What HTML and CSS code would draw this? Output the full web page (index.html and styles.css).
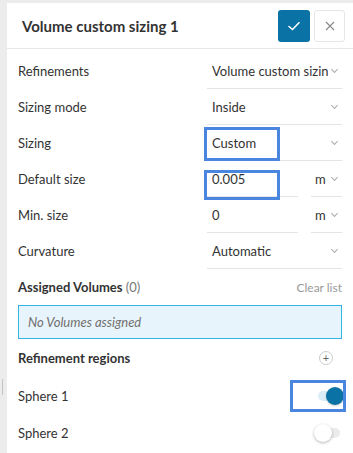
FILE: index.html
```html
<!DOCTYPE html>
<html lang="en">
<head>
  <meta charset="UTF-8">
  <title>Volume custom sizing</title>
  <link rel="stylesheet" href="styles.css">
</head>
<body>
<div class="scroll-mark"></div>
<div class="panel">
  <div class="panel-header">
    <h2 class="panel-title">Volume custom sizing 1</h2>
    <button class="btn btn-ok" aria-label="Save">
      <svg width="14" height="14" viewBox="0 0 14 14"><path d="M2 7.5 L5.5 10.5 L12 3.8" fill="none" stroke="#fff" stroke-width="1.6" stroke-linecap="round" stroke-linejoin="round"/></svg>
    </button>
    <button class="btn btn-close" aria-label="Close">
      <svg width="12" height="12" viewBox="0 0 12 12"><path d="M2 2 L10 10 M10 2 L2 10" stroke="#888" stroke-width="1.1"/></svg>
    </button>
  </div>

  <div class="form">
    <div class="row">
      <div class="label">Refinements</div>
      <div class="field select"><span class="value">Volume custom sizing 1</span><span class="chev"></span></div>
    </div>
    <div class="row">
      <div class="label">Sizing mode</div>
      <div class="field select"><span class="value">Inside</span><span class="chev"></span></div>
    </div>
    <div class="row">
      <div class="label">Sizing</div>
      <div class="field select"><span class="value">Custom</span><span class="chev"></span><span class="mark mark-sizing"></span></div>
    </div>
    <div class="row">
      <div class="label">Default size</div>
      <div class="field-pair">
        <div class="field input"><span class="value">0.005</span><span class="mark mark-size"></span></div>
        <div class="field unit"><span class="value">m</span><span class="chev"></span></div>
      </div>
    </div>
    <div class="row">
      <div class="label">Min. size</div>
      <div class="field-pair">
        <div class="field input"><span class="value">0</span></div>
        <div class="field unit"><span class="value">m</span><span class="chev"></span></div>
      </div>
    </div>
    <div class="row">
      <div class="label">Curvature</div>
      <div class="field select"><span class="value">Automatic</span><span class="chev"></span></div>
    </div>

    <div class="section-head">
      <div class="section-title">Assigned Volumes <span class="count">(0)</span></div>
      <div class="clear-link">Clear list</div>
    </div>
    <div class="assign-box">No Volumes assigned</div>

    <div class="section-head regions-head">
      <div class="section-title">Refinement regions</div>
      <div class="add-btn">+</div>
    </div>

    <div class="toggle-row">
      <div class="label">Sphere 1</div>
      <div class="toggle on"><span class="knob"></span><span class="mark mark-toggle"></span></div>
    </div>
    <div class="toggle-row">
      <div class="label">Sphere 2</div>
      <div class="toggle"><span class="knob"></span></div>
    </div>
  </div>
</div>
</body>
</html>
```

FILE: styles.css
```css
body {
  font-family: 'Lato', 'Noto Sans', sans-serif;
  background-color: #ececec;
  margin: 0;
  padding: 3px 0 0 7px;
  height: 450px;
  overflow: hidden;
  color: #333;
}

.scroll-mark {
  position: absolute;
  left: 2px;
  top: 379px;
  width: 1px;
  height: 16px;
  background: #c4c4c4;
}

.panel {
  background: white;
  height: 450px;
}

.panel-header {
  height: 45px;
  display: flex;
  align-items: center;
  gap: 4px;
  padding: 0 8px 0 15px;
  border-bottom: 1px solid #e6e6e6;
}

.panel-title {
  flex: 1;
  margin: 0;
  font-size: 15px;
  font-weight: 700;
  color: #333;
}

.btn {
  width: 32px;
  height: 32px;
  border-radius: 3px;
  display: flex;
  align-items: center;
  justify-content: center;
  padding: 0;
  cursor: pointer;
}

.btn-ok {
  background-color: #0b72a5;
  border: none;
}

.btn-close {
  width: 31px;
  background: white;
  border: 1px solid #e6e6e6;
}

.form {
  padding: 4px 11px 0 11px;
}

.row {
  height: 36px;
  display: flex;
  align-items: center;
}

.label {
  flex: 1;
  font-size: 13px;
  color: #333;
}

.field {
  position: relative;
  height: 36px;
  display: flex;
  align-items: center;
  border-bottom: 1px solid #e4e4e4;
  box-sizing: border-box;
  font-size: 13px;
  color: #333;
}

.select {
  width: 135px;
  padding: 0 5px 0 5px;
}

.value {
  flex: 1;
  min-width: 0;
  white-space: nowrap;
  overflow: hidden;
}

.chev {
  flex-shrink: 0;
  width: 4px;
  height: 4px;
  margin: -3px 0 0 4px;
  border-right: 1px solid #aaa;
  border-bottom: 1px solid #aaa;
  transform: rotate(45deg);
}

.field-pair {
  width: 135px;
  display: flex;
  gap: 13px;
}

.input {
  width: 91px;
  padding-left: 5px;
}

.unit {
  width: 31px;
  padding: 0 5px 0 4px;
}

.mark {
  position: absolute;
  border: 3px solid #4a86e0;
  box-sizing: border-box;
}

.mark-sizing {
  left: -3px;
  top: 2px;
  width: 76px;
  height: 34px;
}

.mark-size {
  left: -3px;
  top: 9px;
  width: 76px;
  height: 30px;
}

.section-head {
  display: flex;
  align-items: center;
  justify-content: space-between;
  height: 36px;
}

.section-title {
  font-size: 13px;
  font-weight: 700;
  color: #333;
}

.count {
  font-weight: 400;
  color: #777;
}

.clear-link {
  font-size: 12px;
  color: #9a9a9a;
}

.assign-box {
  height: 34px;
  box-sizing: border-box;
  border: 1px solid #32b4e4;
  background-color: #e8f4fb;
  padding: 0 9px;
  display: flex;
  align-items: center;
  font-size: 13px;
  font-style: italic;
  color: #707070;
}

.regions-head {
  height: 38px;
}

.add-btn {
  width: 12px;
  height: 12px;
  border: 1px solid #ccc;
  border-radius: 50%;
  font-size: 11px;
  line-height: 11px;
  text-align: center;
  color: #666;
  margin-right: 9px;
}

.toggle-row {
  height: 37px;
  display: flex;
  align-items: center;
}

.toggle {
  position: relative;
  width: 22px;
  height: 10px;
  border-radius: 5px;
  background: #ebebeb;
  margin-right: 2px;
}

.toggle .knob {
  position: absolute;
  left: -4px;
  top: -4px;
  width: 18px;
  height: 18px;
  border-radius: 50%;
  background: white;
  box-shadow: 0 1px 3px rgba(0, 0, 0, 0.3);
  box-sizing: border-box;
}

.toggle.on {
  background: #dbeef7;
}

.toggle.on .knob {
  left: 8px;
  background: #0b72a5;
  box-shadow: 0 1px 2px rgba(0, 0, 0, 0.2);
}

.mark-toggle {
  left: -28px;
  top: -11px;
  width: 56px;
  height: 32px;
}
```
